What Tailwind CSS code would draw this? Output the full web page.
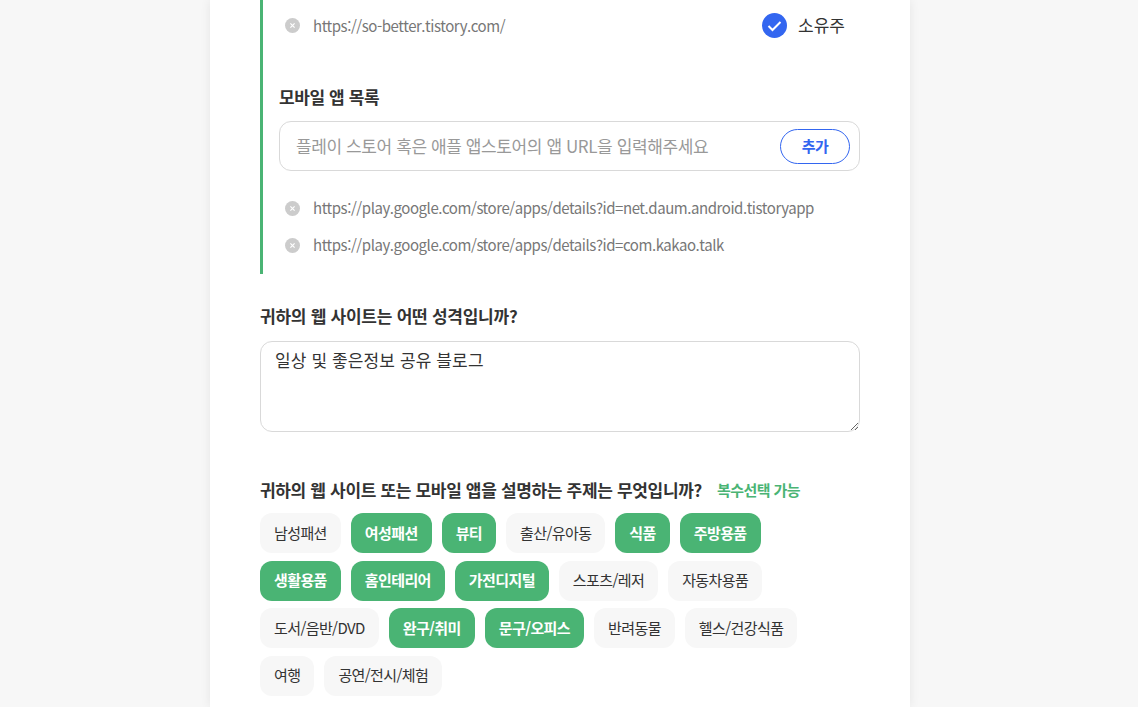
<!DOCTYPE html>
<html lang="ko">
<head>
<meta charset="utf-8">
<script src="https://cdn.jsdelivr.net/npm/@tailwindcss/browser@4"></script>
</head>
<body class="bg-[#f7f7f7] font-['Noto_Sans_CJK_KR','Noto_Sans',sans-serif] text-[#333]">
<div class="h-[707px] overflow-hidden">
  <main class="ml-[210px] h-full w-[700px] bg-white px-[50px] shadow-[0_0_10px_rgba(0,0,0,0.08)]">
    <section class="w-[600px] border-l-[3px] border-[#4ab474] pl-[16px] pb-[10px]">
      <div class="flex h-[51px] items-center pl-[6px]">
        <svg class="mr-[13px] h-[15px] w-[15px]" viewBox="0 0 15 15"><circle cx="7.5" cy="7.5" r="7.5" fill="#ccc"/><path d="M5.4 5.4l4.2 4.2M9.6 5.4l-4.2 4.2" stroke="#fff" stroke-width="1.2"/></svg>
        <span class="mt-[2px] text-[15px] tracking-[-0.45px] text-[#777]">https://so-better.tistory.com/</span>
        <svg class="ml-auto h-[25px] w-[25px]" viewBox="0 0 25 25"><circle cx="12.5" cy="12.5" r="12.5" fill="#3366f0"/><path d="M6.5 13l4 4 8-8" fill="none" stroke="#fff" stroke-width="2"/></svg>
        <span class="mb-[2px] ml-[11px] mr-[15px] text-[17px] text-[#333]">소유주</span>
      </div>
      <h3 class="mt-[31px] text-[17px] leading-[30px] font-bold tracking-[-0.4px] text-[#333]">모바일 앱 목록</h3>
      <div class="mt-[9px] flex h-[50px] w-[581px] items-center rounded-[12px] border border-[#d9d9d9] pr-[9px] pl-[16px]">
        <span class="text-[17px] tracking-[-0.4px] text-[#999]">플레이 스토어 혹은 애플 앱스토어의 앱 URL을 입력해주세요</span>
        <button class="ml-auto h-[35px] w-[70px] rounded-full border border-[#3366f0] bg-white text-[15px] font-bold tracking-[-0.5px] text-[#3366f0]">추가</button>
      </div>
      <ul class="mt-[19px] text-[15px] tracking-[-0.45px] text-[#777]">
        <li class="flex h-[37px] items-center pl-[6px]">
          <svg class="mr-[13px] h-[15px] w-[15px]" viewBox="0 0 15 15"><circle cx="7.5" cy="7.5" r="7.5" fill="#ccc"/><path d="M5.4 5.4l4.2 4.2M9.6 5.4l-4.2 4.2" stroke="#fff" stroke-width="1.2"/></svg>
          <span>https://play.google.com/store/apps/details?id=net.daum.android.tistoryapp</span>
        </li>
        <li class="flex h-[37px] items-center pl-[6px]">
          <svg class="mr-[13px] h-[15px] w-[15px]" viewBox="0 0 15 15"><circle cx="7.5" cy="7.5" r="7.5" fill="#ccc"/><path d="M5.4 5.4l4.2 4.2M9.6 5.4l-4.2 4.2" stroke="#fff" stroke-width="1.2"/></svg>
          <span>https://play.google.com/store/apps/details?id=com.kakao.talk</span>
        </li>
      </ul>
    </section>
    <h3 class="mt-[27px] text-[17px] leading-[30px] font-bold tracking-[-0.25px] text-[#333]">귀하의 웹 사이트는 어떤 성격입니까?</h3>
    <textarea class="mt-[10px] block h-[91px] w-[600px] rounded-[12px] border border-[#d9d9d9] px-[14px] py-[5px] text-[17px] leading-[26px] tracking-[0.12px] text-[#333] outline-none">일상 및 좋은정보 공유 블로그</textarea>
    <div class="mt-[43px] flex items-center">
      <h3 class="text-[17px] leading-[30px] font-bold tracking-[-0.33px] text-[#333]">귀하의 웹 사이트 또는 모바일 앱을 설명하는 주제는 무엇입니까?</h3>
      <span class="ml-[15px] text-[15px] font-bold tracking-[-0.55px] text-[#4ab474]">복수선택 가능</span>
    </div>
    <div class="mt-[8px] flex w-[585px] flex-wrap gap-x-[10px] gap-y-[7.5px] text-[15px] tracking-[-0.6px]">
      <span class="flex h-[40px] items-center rounded-[12px] bg-[#f7f7f7] px-[14px]">남성패션</span>
      <span class="flex h-[40px] items-center rounded-[12px] bg-[#4ab474] px-[14px] font-bold text-white">여성패션</span>
      <span class="flex h-[40px] items-center rounded-[12px] bg-[#4ab474] px-[14px] font-bold text-white">뷰티</span>
      <span class="flex h-[40px] items-center rounded-[12px] bg-[#f7f7f7] px-[14px]">출산/유아동</span>
      <span class="flex h-[40px] items-center rounded-[12px] bg-[#4ab474] px-[14px] font-bold text-white">식품</span>
      <span class="flex h-[40px] items-center rounded-[12px] bg-[#4ab474] px-[14px] font-bold text-white">주방용품</span>
      <span class="flex h-[40px] items-center rounded-[12px] bg-[#4ab474] px-[14px] font-bold text-white">생활용품</span>
      <span class="flex h-[40px] items-center rounded-[12px] bg-[#4ab474] px-[14px] font-bold text-white">홈인테리어</span>
      <span class="flex h-[40px] items-center rounded-[12px] bg-[#4ab474] px-[14px] font-bold text-white">가전디지털</span>
      <span class="flex h-[40px] items-center rounded-[12px] bg-[#f7f7f7] px-[14px]">스포츠/레저</span>
      <span class="flex h-[40px] items-center rounded-[12px] bg-[#f7f7f7] px-[14px]">자동차용품</span>
      <span class="flex h-[40px] items-center rounded-[12px] bg-[#f7f7f7] px-[14px]">도서/음반/DVD</span>
      <span class="flex h-[40px] items-center rounded-[12px] bg-[#4ab474] px-[14px] font-bold text-white">완구/취미</span>
      <span class="flex h-[40px] items-center rounded-[12px] bg-[#4ab474] px-[14px] font-bold text-white">문구/오피스</span>
      <span class="flex h-[40px] items-center rounded-[12px] bg-[#f7f7f7] px-[14px]">반려동물</span>
      <span class="flex h-[40px] items-center rounded-[12px] bg-[#f7f7f7] px-[14px]">헬스/건강식품</span>
      <span class="flex h-[40px] items-center rounded-[12px] bg-[#f7f7f7] px-[14px]">여행</span>
      <span class="flex h-[40px] items-center rounded-[12px] bg-[#f7f7f7] px-[14px]">공연/전시/체험</span>
    </div>
  </main>
</div>
</body>
</html>
